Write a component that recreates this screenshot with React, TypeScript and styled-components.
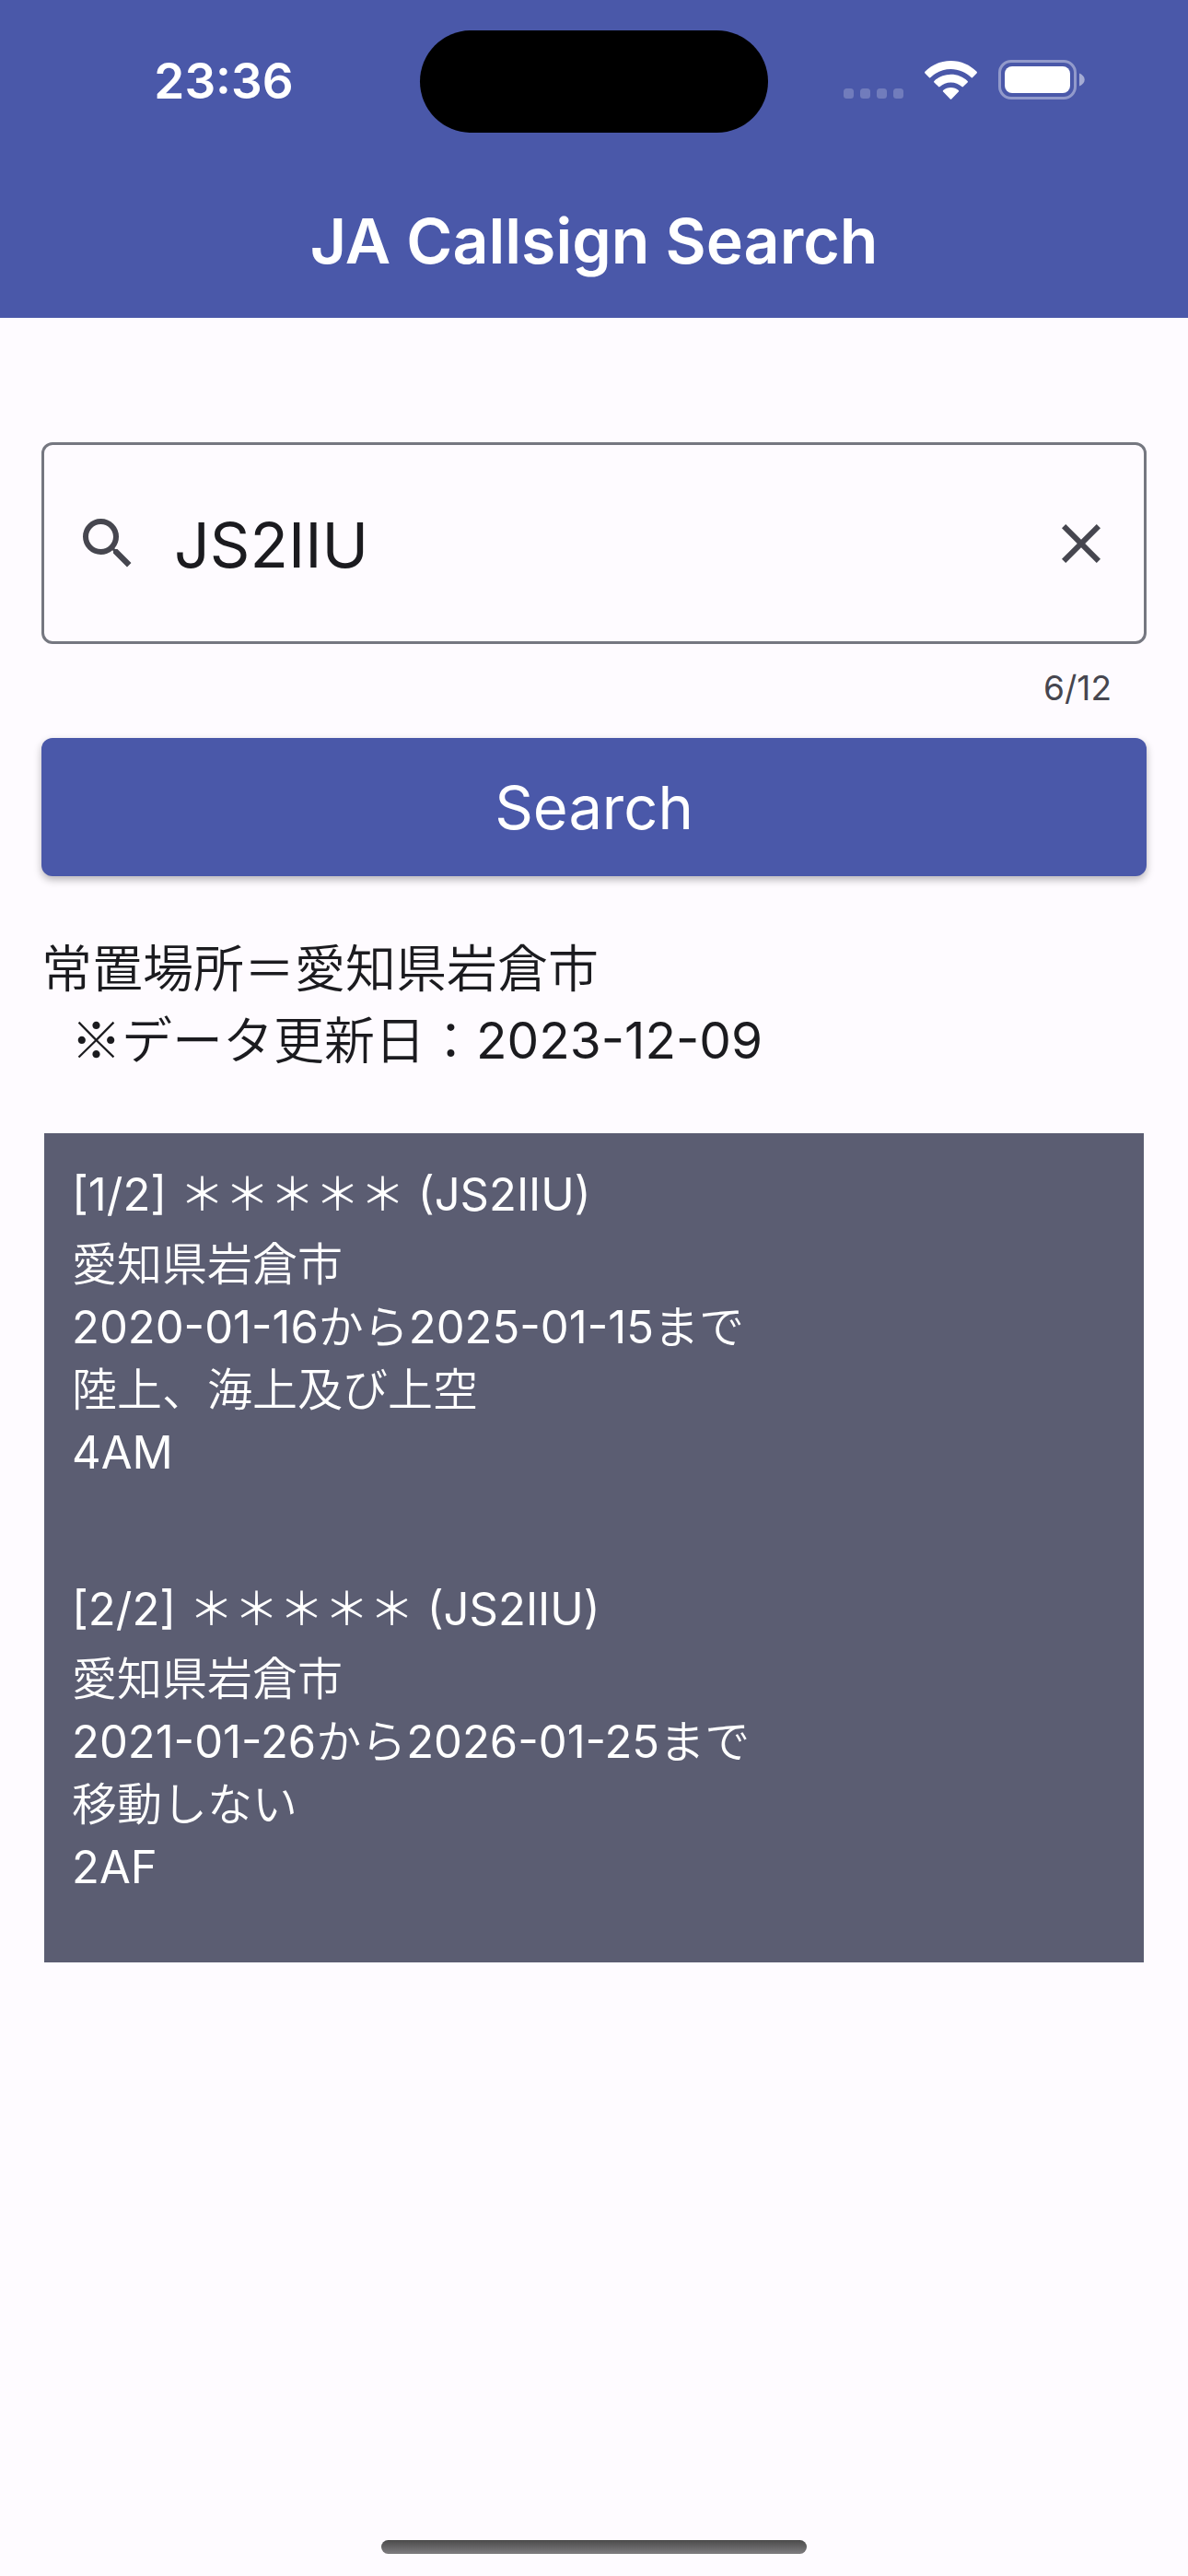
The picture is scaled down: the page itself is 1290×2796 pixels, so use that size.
import React, { useId, useRef, useState } from "react";
import styled, { createGlobalStyle } from "styled-components";

const GlobalStyle = createGlobalStyle`
  *, *::before, *::after {
    box-sizing: border-box;
  }
  body {
    margin: 0;
    background: #fefbff;
    color: #1b1b1f;
    font-family: Inter, "Noto Sans CJK JP DemiLight", "Noto Sans CJK JP", sans-serif;
  }
`;

const Screen = styled.div`
  display: flex;
  flex-direction: column;
  min-height: 100vh;
`;

const AppBar = styled.header`
  background: #4a58a9;
  color: #ffffff;
`;

const StatusBar = styled.div`
  display: grid;
  grid-template-columns: 1fr auto 1fr;
  align-items: center;
  height: 177px;
`;

const Clock = styled.time`
  padding: 0 0 2px 30px;
  text-align: center;
  font-size: 53px;
  line-height: 64px;
  font-weight: 600;
`;

const Island = styled.div`
  width: 378px;
  height: 111px;
  border-radius: 56px;
  background: #000000;
`;

const Indicators = styled.div`
  display: flex;
  align-items: center;
  justify-content: center;
  gap: 23px;
  padding: 0 30px 4px 0;
`;

const Title = styled.h1`
  margin: 0;
  text-align: center;
  font-size: 68px;
  line-height: 168px;
  font-weight: 600;
`;

const Content = styled.main`
  padding: 135px 45px 0;
`;

const SearchForm = styled.form`
  display: flex;
  flex-direction: column;
`;

const Field = styled.div`
  display: flex;
  align-items: center;
  height: 219px;
  padding: 0 32px 0 33px;
  border: 3px solid #757780;
  border-radius: 12px;
  color: #46464f;
`;

const FieldLabel = styled.label`
  display: flex;
  padding-right: 36px;
`;

const CallsignInput = styled.input`
  flex: 1;
  min-width: 0;
  padding: 2px 0 0;
  border: 0;
  outline: 0;
  background: transparent;
  color: #1b1b1f;
  font: inherit;
  font-size: 68px;
  line-height: 96px;
`;

const ClearButton = styled.button`
  display: flex;
  padding: 0;
  border: 0;
  background: none;
  color: inherit;
`;

const Counter = styled.output`
  padding: 24px 38px 30px;
  text-align: right;
  font-size: 37px;
  line-height: 48px;
  color: #46464f;
`;

const SubmitButton = styled.button`
  height: 150px;
  border: 0;
  border-radius: 12px;
  background: #4a58a9;
  box-shadow: 0 4px 8px rgba(0, 0, 0, 0.28);
  color: #ffffff;
  font: inherit;
  font-size: 65px;
`;

const Summary = styled.div`
  padding: 57px 0 66px;
  font-size: 55px;
  line-height: 78px;
`;

const SummaryLine = styled.p<{ $indented?: boolean }>`
  display: flex;
  align-items: baseline;
  height: 78px;
  margin: 0;
  padding-left: ${({ $indented }) => ($indented ? "32px" : "0")};
`;

const SummaryLabel = styled.span`
  font-family: "Noto Sans CJK JP DemiLight", "Noto Sans CJK JP", sans-serif;
`;

const Results = styled.ol`
  margin: 0 3px;
  padding: 0;
  list-style: none;
  background: #5b5d72;
  color: #ffffff;
`;

const Station = styled.li`
  padding: 33px 30px 69px;
  font-size: 49px;
  line-height: 68px;
`;

const StationName = styled.h2`
  margin: 0 0 8px;
  font: inherit;
`;

const StationLine = styled.p`
  margin: 0;
`;

const HomeArea = styled.footer`
  display: flex;
  justify-content: center;
  margin-top: auto;
  padding: 24px 0;
`;

const HomeIndicator = styled.div`
  width: 462px;
  height: 15px;
  border-radius: 8px;
  background: linear-gradient(#4a4a4a, #7f7d80);
`;

const SignalDots = () => (
  <svg width="65" height="42" viewBox="0 0 65 42" fill="#ffffff" fillOpacity="0.22" aria-hidden="true">
    {[0, 18, 36, 54].map((x) => (
      <rect key={x} x={x} y="30" width="11" height="11" rx="3.5" />
    ))}
  </svg>
);

const WifiIcon = () => (
  <svg width="57" height="42" viewBox="0 0 57 42" fill="#ffffff" aria-hidden="true">
    <path d="M28.5 0C39.6 0 49.4 4.500 56.600 11.800Q57.300 12.600 56.600 13.400L51.900 18.200Q51.200 18.700 50.500 18.100C44.800 12.500 37 9 28.500 9C20 9 12.200 12.500 6.500 18.100Q5.800 18.700 5.100 18.200L.4 13.400Q-.3 12.600 .4 11.800C7.600 4.500 17.400 0 28.500 0Z" />
    <path d="M28.500 14.700C35.500 14.700 41.900 17.400 46.600 21.900Q47.300 22.600 46.600 23.400L41.900 28.100Q41.200 28.700 40.400 28.100C37.300 25.200 33.100 23.400 28.500 23.400C23.900 23.400 19.700 25.200 16.600 28.100Q15.800 28.700 15.100 28.100L10.400 23.400Q9.700 22.600 10.400 21.900C15.100 17.400 21.500 14.700 28.500 14.700Z" />
    <path d="M28.500 29C31.700 29 34.600 30.100 36.800 32.100Q37.600 32.800 36.900 33.600L29.200 41.500Q28.500 42.200 27.800 41.500L20.100 33.600Q19.400 32.800 20.200 32.100C22.400 30.100 25.300 29 28.500 29Z" />
  </svg>
);

const BatteryIcon = () => (
  <svg width="94" height="43" viewBox="0 0 94 43" aria-hidden="true">
    <rect x="1.5" y="1.500" width="82" height="40" rx="12.500" fill="none" stroke="#ffffff" strokeOpacity="0.4" strokeWidth="3" />
    <rect x="7" y="7" width="71" height="29" rx="8" fill="#ffffff" />
    <path d="M88 14.500C91.500 16 93.700 18.500 93.700 21.500S91.500 27 88 28.500Z" fill="#ffffff" fillOpacity="0.5" />
  </svg>
);

const SearchIcon = () => (
  <svg width="72" height="72" viewBox="0 0 24 24" fill="currentColor" aria-hidden="true">
    <path d="M15.500 14h-.79l-.28-.27A6.471 6.471 0 0 0 16 9.500 6.500 6.500 0 1 0 9.500 16c1.610 0 3.090-.59 4.230-1.570l.27.28v.79l5 4.990L20.490 19l-4.990-5zm-6 0C7.010 14 5 11.990 5 9.500S7.010 5 9.500 5 14 7.010 14 9.500 11.990 14 9.500 14z" />
  </svg>
);

const CloseIcon = () => (
  <svg width="72" height="72" viewBox="0 0 24 24" fill="currentColor" aria-hidden="true">
    <path d="M19 6.410 17.590 5 12 10.590 6.410 5 5 6.410 10.590 12 5 17.590 6.410 19 12 13.410 17.590 19 19 17.590 13.410 12z" />
  </svg>
);

const MAX_LENGTH = 12;

const stations = [
  {
    name: "＊＊＊＊＊",
    callsign: "JS2IIU",
    lines: ["愛知県岩倉市", "2020-01-16から2025-01-15まで", "陸上、海上及び上空", "4AM"],
  },
  {
    name: "＊＊＊＊＊",
    callsign: "JS2IIU",
    lines: ["愛知県岩倉市", "2021-01-26から2026-01-25まで", "移動しない", "2AF"],
  },
];

export default function App() {
  const [callsign, setCallsign] = useState("JS2IIU");
  const inputId = useId();
  const inputRef = useRef<HTMLInputElement>(null);

  const clear = () => {
    setCallsign("");
    inputRef.current?.focus();
  };

  return (
    <Screen lang="ja">
      <GlobalStyle />
      <AppBar>
        <StatusBar>
          <Clock>23:36</Clock>
          <Island />
          <Indicators>
            <SignalDots />
            <WifiIcon />
            <BatteryIcon />
          </Indicators>
        </StatusBar>
        <Title>JA Callsign Search</Title>
      </AppBar>

      <Content>
        <SearchForm onSubmit={(event: React.FormEvent) => event.preventDefault()}>
          <Field>
            <FieldLabel htmlFor={inputId} aria-label="Callsign">
              <SearchIcon />
            </FieldLabel>
            <CallsignInput
              id={inputId}
              ref={inputRef}
              type="text"
              maxLength={MAX_LENGTH}
              value={callsign}
              onChange={(event: React.ChangeEvent<HTMLInputElement>) => setCallsign(event.target.value)}
            />
            <ClearButton type="button" aria-label="Clear" onClick={clear}>
              <CloseIcon />
            </ClearButton>
          </Field>
          <Counter htmlFor={inputId}>{`${callsign.length}/${MAX_LENGTH}`}</Counter>
          <SubmitButton type="submit">Search</SubmitButton>
        </SearchForm>

        <Summary>
          <SummaryLine>
            <SummaryLabel>常置場所＝愛知県岩倉市</SummaryLabel>
          </SummaryLine>
          <SummaryLine $indented>
            <SummaryLabel>※データ更新日：</SummaryLabel>
            <time>2023-12-09</time>
          </SummaryLine>
        </Summary>

        <Results>
          {stations.map((station, index) => (
            <Station key={index}>
              <StationName>
                {`[${index + 1}/${stations.length}] ${station.name} (${station.callsign})`}
              </StationName>
              {station.lines.map((line) => (
                <StationLine key={line}>{line}</StationLine>
              ))}
            </Station>
          ))}
        </Results>
      </Content>

      <HomeArea>
        <HomeIndicator />
      </HomeArea>
    </Screen>
  );
}
